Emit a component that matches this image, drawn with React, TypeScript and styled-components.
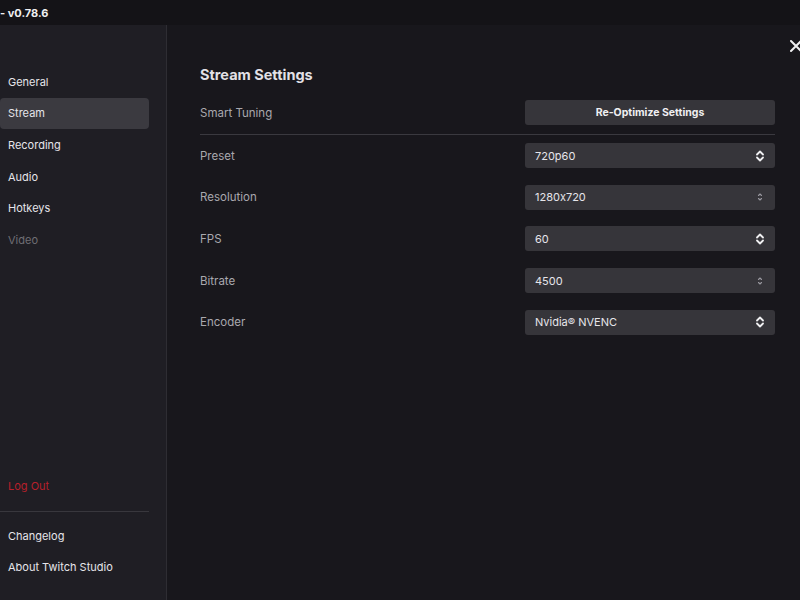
import React from "react";
import styled, { createGlobalStyle } from "styled-components";

const Global = createGlobalStyle`
  html, body { margin: 0; padding: 0; background: #18171c; }
  body { font-family: Inter, "Noto Sans", "Liberation Sans", sans-serif; -webkit-font-smoothing: antialiased; font-feature-settings: "calt" 0; }
  * { box-sizing: border-box; }
`;

const Page = styled.div`
  width: 800px;
  height: 600px;
  display: flex;
  flex-direction: column;
  background: #18171c;
  overflow: hidden;
  position: relative;
`;

const TitleBar = styled.div`
  height: 25px;
  flex: none;
  background: #141317;
  color: #efeff1;
  font-size: 11px;
  font-weight: 700;
  display: flex;
  align-items: center;
  padding-top: 1px;
`;

const Body = styled.div`
  flex: 1;
  display: flex;
  min-height: 0;
`;

const Sidebar = styled.nav`
  width: 167px;
  flex: none;
  background: #1f1e24;
  border-right: 1px solid #2e2d33;
  display: flex;
  flex-direction: column;
  padding: 41px 17px 0 0;
`;

const NavItem = styled.div<{ $active?: boolean; $muted?: boolean; $danger?: boolean }>`
  height: 31.6px;
  display: flex;
  align-items: center;
  padding-left: 8px;
  border-radius: 4px;
  font-size: 11px;
  color: ${(p) => (p.$danger ? "#b8202b" : p.$muted ? "#6f6e74" : "#e6e5ea")};
  background: ${(p) => (p.$active ? "#3b3a40" : "transparent")};
`;

const Spacer = styled.div`
  flex: 1;
`;

const SideDivider = styled.div`
  height: 1px;
  background: #38373d;
  margin: 9px 0 8px;
`;

const Bottom = styled.div`
  display: flex;
  flex-direction: column;
  padding-bottom: 17px;
`;

const Main = styled.main`
  flex: 1;
  padding: 40px 25px 0 33px;
  display: flex;
  flex-direction: column;
`;

const Heading = styled.h1`
  margin: 0 0 15px;
  font-size: 14.5px;
  font-weight: 700;
  color: #e2e1e6;
  height: 20px;
  line-height: 20px;
`;

const Row = styled.div`
  display: grid;
  grid-template-columns: 325px 250px;
  align-items: center;
  height: 25px;
  margin-bottom: 16.7px;
`;

const Label = styled.div`
  font-size: 11.5px;
  color: #a9a8ae;
`;

const Button = styled.button`
  height: 25px;
  border: none;
  border-radius: 3px;
  background: #36353a;
  color: #efeff1;
  font-family: inherit;
  font-size: 10.5px;
  font-weight: 700;
  padding: 0;
`;

const Divider = styled.div`
  height: 1px;
  background: #3a393f;
  width: 575px;
  margin: -7.7px 0 8px;
`;

const Select = styled.div`
  height: 25px;
  border-radius: 3px;
  background: #36353a;
  color: #e6e5ea;
  font-size: 11px;
  display: flex;
  align-items: center;
  justify-content: space-between;
  padding: 0 10px;
`;

const Close = styled.div`
  position: absolute;
  right: -4px;
  top: 38px;
  width: 16px;
  height: 16px;
`;

const Stepper = ({ bold }: { bold?: boolean }) =>
  bold ? (
    <svg width="10" height="12" viewBox="0 0 10 12">
      <path d="M2 4.5 L5 1.5 L8 4.5 M2 7.5 L5 10.5 L8 7.5" fill="none" stroke="#efeff1" strokeWidth="1.8" strokeLinecap="round" strokeLinejoin="round" />
    </svg>
  ) : (
    <svg width="10" height="12" viewBox="0 0 10 12">
      <path d="M3.5 4.5 L5 3 L6.5 4.5 M3.5 7.5 L5 9 L6.5 7.5" fill="none" stroke="#9a99a0" strokeWidth="1.1" strokeLinecap="round" strokeLinejoin="round" />
    </svg>
  );

const rows = [
  { label: "Preset", value: "720p60", bold: true },
  { label: "Resolution", value: "1280x720", bold: false },
  { label: "FPS", value: "60", bold: true },
  { label: "Bitrate", value: "4500", bold: false },
  { label: "Encoder", value: "Nvidia® NVENC", bold: true },
];

export default function App() {
  return (
    <>
      <Global />
      <Page>
        <TitleBar>- v0.78.6</TitleBar>
        <Body>
          <Sidebar>
            <NavItem>General</NavItem>
            <NavItem $active>Stream</NavItem>
            <NavItem>Recording</NavItem>
            <NavItem>Audio</NavItem>
            <NavItem>Hotkeys</NavItem>
            <NavItem $muted>Video</NavItem>
            <Spacer />
            <Bottom>
              <NavItem $danger>Log Out</NavItem>
              <SideDivider />
              <NavItem>Changelog</NavItem>
              <NavItem>About Twitch Studio</NavItem>
            </Bottom>
          </Sidebar>
          <Main>
            <Heading>Stream Settings</Heading>
            <Row>
              <Label>Smart Tuning</Label>
              <Button>Re-Optimize Settings</Button>
            </Row>
            <Divider />
            {rows.map((r) => (
              <Row key={r.label}>
                <Label>{r.label}</Label>
                <Select>
                  <span>{r.value}</span>
                  <Stepper bold={r.bold} />
                </Select>
              </Row>
            ))}
          </Main>
        </Body>
        <Close>
          <svg width="16" height="16" viewBox="0 0 16 16">
            <path d="M3 3 L13 13 M13 3 L3 13" stroke="#efeff1" strokeWidth="2" strokeLinecap="round" />
          </svg>
        </Close>
      </Page>
    </>
  );
}
